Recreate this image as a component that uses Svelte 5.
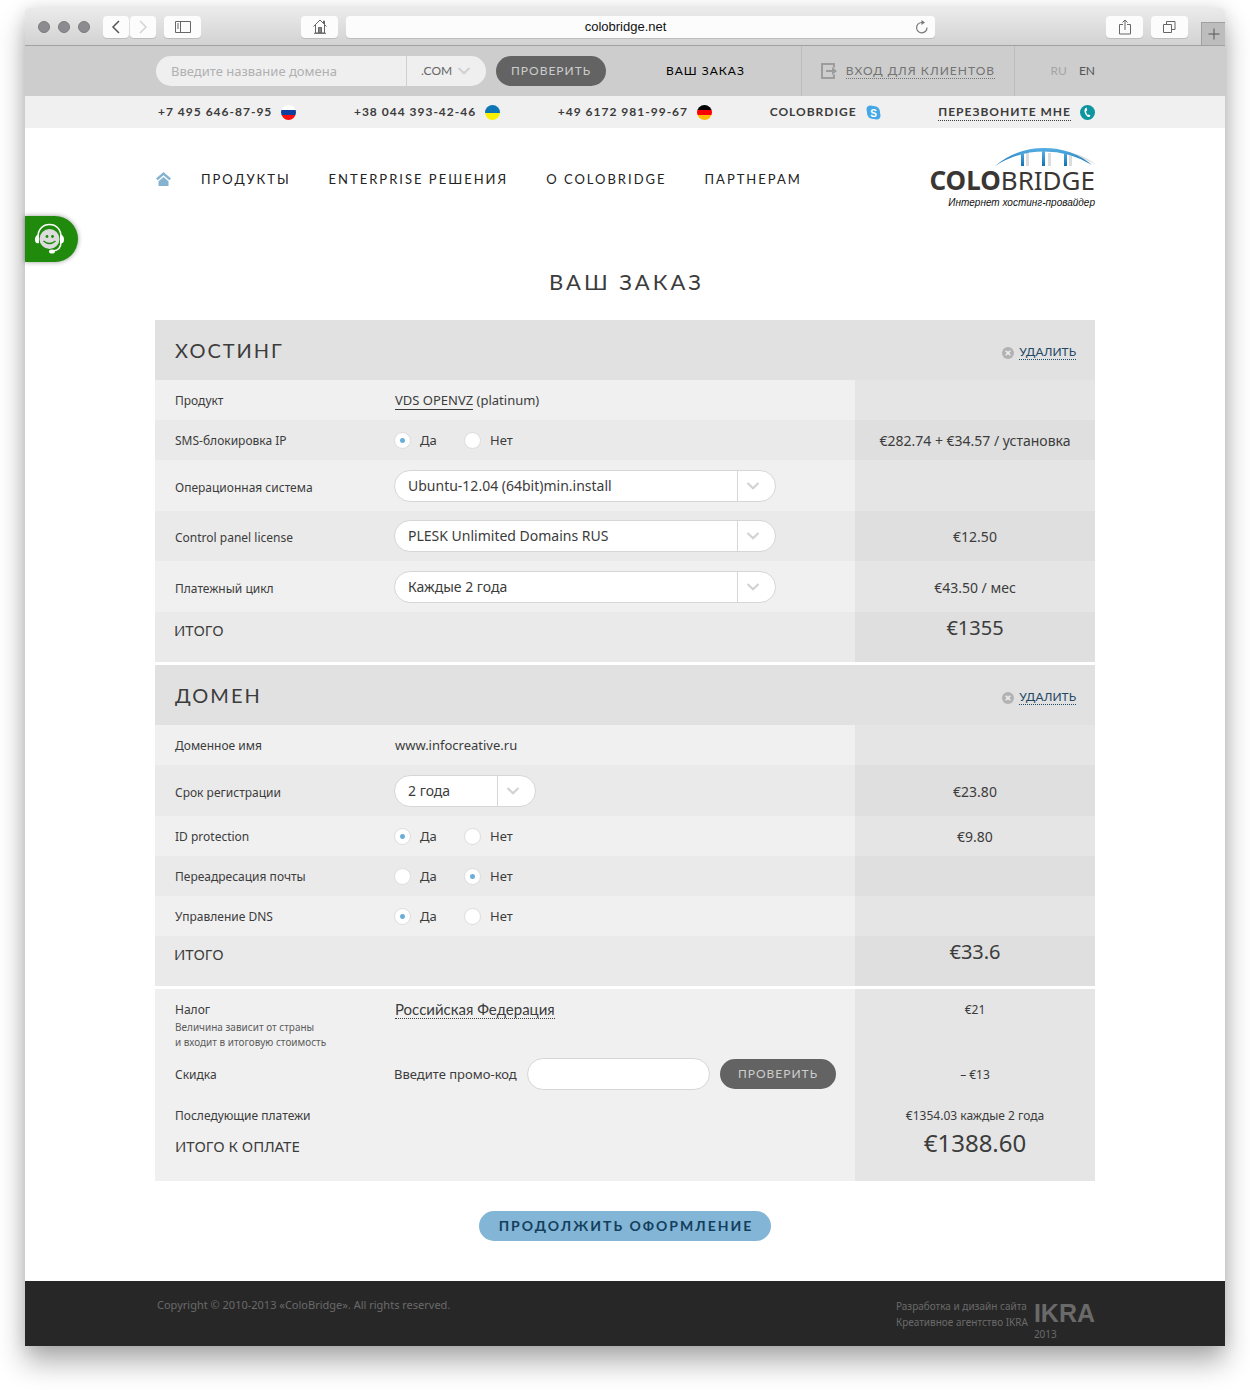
<script>
	let domain = $state("");
	let zone = $state(".COM");
	let promo = $state("");

	const yesNo = ["Да", "Нет"];

	const contacts = [
		{ text: "+7 495 646-87-95", icon: "ru" },
		{ text: "+38 044 393-42-46", icon: "ua" },
		{ text: "+49 6172 981-99-67", icon: "de" },
	];

	const menu = ["ПРОДУКТЫ", "ENTERPRISE РЕШЕНИЯ", "О COLOBRIDGE", "ПАРТНЕРАМ"];

	let sections = $state([
		{
			title: "ХОСТИНГ",
			total: "€1355",
			rows: [
				{ id: "product", label: "Продукт", type: "link", value: "VDS OPENVZ", note: "(platinum)" },
				{ id: "sms", label: "SMS-блокировка IP", type: "radio", value: "Да", price: "€282.74 + €34.57 / установка" },
				{ id: "os", label: "Операционная система", type: "select", value: "Ubuntu-12.04 (64bit)min.install", size: "tall" },
				{ id: "panel", label: "Control panel license", type: "select", value: "PLESK Unlimited Domains RUS", price: "€12.50", size: "mid" },
				{ id: "cycle", label: "Платежный цикл", type: "select", value: "Каждые 2 года", price: "€43.50 / мес", size: "tall" },
			],
		},
		{
			title: "ДОМЕН",
			total: "€33.6",
			rows: [
				{ id: "name", label: "Доменное имя", type: "text", value: "www.infocreative.ru" },
				{ id: "term", label: "Срок регистрации", type: "select", value: "2 года", price: "€23.80", size: "tall", short: true },
				{ id: "idp", label: "ID protection", type: "radio", value: "Да", price: "€9.80" },
				{ id: "mail", label: "Переадресация почты", type: "radio", value: "Нет" },
				{ id: "dns", label: "Управление DNS", type: "radio", value: "Да" },
			],
		},
	]);
</script>

{#snippet chevron()}
	<svg class="chevron" viewBox="0 0 14 8" width="14" height="8" aria-hidden="true">
		<path d="M1.5 1 7 6.2 12.5 1" fill="none" stroke="currentColor" stroke-width="2.2" />
	</svg>
{/snippet}

<div class="window">
	<div class="chrome">
		<div class="lights"><i></i><i></i><i></i></div>
		<div class="history">
			<button aria-label="Назад">
				<svg width="10" height="14" viewBox="0 0 10 14"><path d="M8 1 2 7l6 6" fill="none" stroke="#555" stroke-width="1.5" /></svg>
			</button>
			<button aria-label="Вперёд">
				<svg width="10" height="14" viewBox="0 0 10 14"><path d="m2 1 6 6-6 6" fill="none" stroke="#d4d4d4" stroke-width="1.5" /></svg>
			</button>
		</div>
		<button class="wide" aria-label="Боковая панель">
			<svg width="16" height="12" viewBox="0 0 16 12" fill="none" stroke="#666">
				<path d="M.5.5h15v11H.5zM5.5.5v11M2 3h2M2 5h2M2 7h2" />
			</svg>
		</button>
		<button class="wide home-btn" aria-label="Домой">
			<svg width="14" height="15" viewBox="0 0 14 15" fill="none" stroke="#666">
				<path d="M.5 7.5 7 1l6.5 6.5M2.5 6v8h9V6M1 14.3h12M10.5 4.5V2h1v3" />
				<path d="M5.5 13.5v-5h3v5z" fill="#888" />
			</svg>
		</button>
		<div class="address">
			<input aria-label="Адрес" value="colobridge.net" />
			<svg width="14" height="14" viewBox="0 0 14 14" aria-hidden="true">
				<path d="M12 7.5A5.2 5.2 0 1 1 7 2.5h1" fill="none" stroke="#777" stroke-width="1.2" />
				<path d="M6.5 0 10 2.5 6.5 5z" fill="#777" />
			</svg>
		</div>
		<button class="wide" aria-label="Поделиться">
			<svg width="12" height="16" viewBox="0 0 12 16" fill="none" stroke="#666">
				<path d="M4 5.5H.5V15h11V5.5H8M6 11V1M3.5 3.5 6 1l2.5 2.5" />
			</svg>
		</button>
		<button class="wide" aria-label="Вкладки">
			<svg width="13" height="12" viewBox="0 0 13 12" fill="none" stroke="#666">
				<path d="M.5 3.5h8v8h-8zM3.5 3V.5H12v8H9" />
			</svg>
		</button>
		<button class="new-tab" aria-label="Новая вкладка">
			<svg width="12" height="12" viewBox="0 0 12 12"><path d="M6 .5v11M.5 6h11" stroke="#555" /></svg>
		</button>
	</div>

	<div class="topbar">
		<div class="inner">
			<div class="search">
				<input aria-label="Название домена" placeholder="Введите название домена" bind:value={domain} />
				<div class="zone">
					<select aria-label="Зона" bind:value={zone}>
						<option>.COM</option>
						<option>.NET</option>
					</select>
					{@render chevron()}
				</div>
			</div>
			<button class="pill check">ПРОВЕРИТЬ</button>
			<a class="cart" href="#order">ВАШ ЗАКАЗ</a>
			<div class="login">
				<svg width="16" height="16" viewBox="0 0 16 16" aria-hidden="true">
					<path d="M13 4.5V1H1v14h12v-3.5" fill="none" stroke="#9c9c9c" stroke-width="2" />
					<path d="M5 7h6V4l5 4-5 4V9H5z" fill="#9c9c9c" />
				</svg>
				<a class="dotted" href="#login">ВХОД ДЛЯ КЛИЕНТОВ</a>
			</div>
			<div class="lang">
				<a href="#ru">RU</a>
				<a class="current" href="#en">EN</a>
			</div>
		</div>
	</div>

	<div class="contacts">
		<div class="inner">
			{#each contacts as c}
				<span class="contact">
					{c.text}
					<i class="flag {c.icon}"></i>
				</span>
			{/each}
			<span class="contact">
				COLOBRDIGE
				<svg width="15" height="15" viewBox="0 0 15 15" aria-hidden="true">
					<rect x="1" y="1" width="13" height="13" rx="6" fill="#45a8e6" />
					<circle cx="4.5" cy="4.5" r="4" fill="#45a8e6" />
					<circle cx="10.5" cy="10.5" r="4" fill="#45a8e6" />
					<text x="7.5" y="11.5" text-anchor="middle" class="skype-s">S</text>
				</svg>
			</span>
			<span class="contact">
				<a class="dotted" href="#callback">ПЕРЕЗВОНИТЕ МНЕ</a>
				<svg width="15" height="15" viewBox="0 0 15 15" aria-hidden="true">
					<circle cx="7.5" cy="7.5" r="7.5" fill="#0d95a0" />
					<path d="M6.6 2.6 5.2 3.2C3.6 5.6 4.8 9.8 8.2 12l1.7-.2.5-1.4-1.7-1-1 .6C6.6 8.8 6 7.5 6.1 6.1l1.2-.6z" fill="#fff" />
				</svg>
			</span>
		</div>
	</div>

	<header class="inner site-header">
		<nav>
			<a href="#home" aria-label="Главная">
				<svg width="15" height="14" viewBox="0 0 15 14" fill="#85b3cf">
					<path d="M7.5 0 0 6.5l1.7 1.7 5.8-5 5.8 5L15 6.5z" />
					<path d="M7.5 5 2.5 9.3V14h10V9.3z" />
				</svg>
			</a>
			{#each menu as item}
				<a href="#menu">{item}</a>
			{/each}
		</nav>
		<a class="logo" href="#home">
			<svg width="104" height="18" viewBox="0 0 104 18" aria-hidden="true">
				<defs>
					<linearGradient id="arc" x1="0" x2="0" y1="0" y2="1">
						<stop offset="0" stop-color="#58b0e4" />
						<stop offset="1" stop-color="#1371b3" />
					</linearGradient>
				</defs>
				<g fill="#dcdcdc">
					<path d="M32 5h3v13h-3zM54 5h3v13h-3zM75 5h3v13h-3z" />
					<path d="M60 1Q86 4 103 17Q84 7 60 3z" />
				</g>
				<g fill="url(#arc)">
					<path d="M1 18Q22 0 50 0T98 17Q76 3.5 50 3.5T1 18z" />
					<path d="M27 5h3v13h-3zM48 3h3v15h-3zM70 5h3v13h-3z" />
				</g>
			</svg>
			<span class="wordmark"><b>COLO</b>BRIDGE</span>
			<em>Интернет хостинг-провайдер</em>
		</a>
	</header>

	<button class="chat" aria-label="Онлайн-консультант">
		<svg width="32" height="32" viewBox="0 0 32 32">
			<path d="M4 14C4 6 9 1.5 15.5 1.5S27 6 27 14v5c0 5-3 8.5-8 9" fill="none" stroke="#fff" stroke-width="1.5" />
			<path d="M5 11v9C2 21 1 19 1 16.5S2 12 5 11zM26 11v9c3 1 4-1 4-3.5S29 12 26 11z" fill="#fff" />
			<circle cx="15.5" cy="16" r="10" fill="#dcdcdc" />
			<circle cx="13" cy="13.5" r="1.4" fill="#1f8a0c" />
			<circle cx="18.5" cy="13.5" r="1.4" fill="#1f8a0c" />
			<path d="M9.5 18q6 5 12 0" fill="none" stroke="#1f8a0c" stroke-width="1.4" />
			<ellipse cx="18" cy="28.5" rx="3" ry="2" fill="#fff" />
		</svg>
	</button>

	<main class="inner" id="order">
		<h1>ВАШ ЗАКАЗ</h1>

		{#each sections as section}
			<section>
				<div class="section-head">
					<h2>{section.title}</h2>
					<div class="remove">
						<svg width="12" height="12" viewBox="0 0 12 12" aria-hidden="true">
							<circle cx="6" cy="6" r="6" fill="#b2b2b2" />
							<path d="m3.7 3.7 4.6 4.6m0-4.6L3.7 8.3" stroke="#eee" stroke-width="1.6" />
						</svg>
						<a class="dotted" href="#remove">УДАЛИТЬ</a>
					</div>
				</div>
				<table class="striped">
					<tbody>
						{#each section.rows as row (row.id)}
							<tr class={row.size}>
								<th scope="row">
									{#if row.type === "select"}
										<label for={row.id}>{row.label}</label>
									{:else}
										<span id="{row.id}-label">{row.label}</span>
									{/if}
								</th>
								<td>
									{#if row.type === "link"}
										<a class="product" href="#product">{row.value}</a> {row.note}
									{:else if row.type === "radio"}
										<div class="radios" role="radiogroup" aria-labelledby="{row.id}-label">
											{#each yesNo as option}
												<label>
													<input type="radio" name={row.id} value={option} bind:group={row.value} />
													{option}
												</label>
											{/each}
										</div>
									{:else if row.type === "select"}
										<div class="select" class:short={row.short}>
											<select id={row.id}>
												<option>{row.value}</option>
											</select>
											{@render chevron()}
										</div>
									{:else}
										{row.value}
									{/if}
								</td>
								<td class="price">{row.price ?? ""}</td>
							</tr>
						{/each}
						<tr class="total">
							<th scope="row">ИТОГО</th>
							<td></td>
							<td class="price">{section.total}</td>
						</tr>
					</tbody>
				</table>
			</section>
		{/each}

		<table class="summary">
			<tbody>
				<tr class="tax">
					<th scope="row">
						Налог
						<small>Величина зависит от страны<br />и входит в итоговую стоимость</small>
					</th>
					<td><a class="dotted country" href="#country">Российская Федерация</a></td>
					<td class="price">€21</td>
				</tr>
				<tr class="discount">
					<th scope="row">Скидка</th>
					<td>
						<div class="promo">
							<label for="promo">Введите промо-код</label>
							<input id="promo" bind:value={promo} />
							<button class="pill">ПРОВЕРИТЬ</button>
						</div>
					</td>
					<td class="price">– €13</td>
				</tr>
				<tr class="next">
					<th scope="row">Последующие платежи</th>
					<td></td>
					<td class="price">€1354.03 каждые 2 года</td>
				</tr>
				<tr class="total grand">
					<th scope="row">ИТОГО К ОПЛАТЕ</th>
					<td></td>
					<td class="price">€1388.60</td>
				</tr>
			</tbody>
		</table>

		<button class="submit">ПРОДОЛЖИТЬ ОФОРМЛЕНИЕ</button>
	</main>

	<footer>
		<div class="inner">
			<p>Copyright © 2010-2013 «ColoBridge». All rights reserved.</p>
			<div class="agency">
				<p>Разработка и дизайн сайта<br />Креативное агентство IKRA</p>
				<div class="ikra"><strong>IKRA</strong><span>2013</span></div>
			</div>
		</div>
	</footer>
</div>

<style>
	:global(body) {
		background: #fff;
	}
	.window {
		--body: "Noto Sans", "Open Sans", sans-serif;
		--display: Lato, "Noto Sans", sans-serif;
		position: relative;
		margin: 8px 25px 45px;
		background: #fff;
		border-radius: 4px 4px 0 0;
		box-shadow: 0 16px 28px rgba(0, 0, 0, 0.32), 0 0 16px rgba(0, 0, 0, 0.1);
		font-family: var(--body);
		font-size: 13px;
		line-height: 20px;
		color: #3c3c3c;
	}
	* {
		box-sizing: border-box;
	}
	a {
		color: inherit;
		text-decoration: none;
	}
	svg {
		display: block;
		flex: none;
	}
	button,
	input,
	select {
		margin: 0;
		padding: 0;
		border: 0;
		font: inherit;
		color: inherit;
		outline: none;
	}
	select {
		appearance: none;
		background: none;
	}
	p {
		margin: 0;
	}
	.inner {
		max-width: 940px;
		margin: 0 auto;
	}
	.dotted {
		border-bottom: 1px dotted currentColor;
	}

	/* browser chrome */
	.chrome {
		display: flex;
		align-items: center;
		height: 38px;
		padding-left: 13px;
		background: linear-gradient(#ebebeb, #d2d2d2);
		border-bottom: 1px solid #a0a0a0;
		border-radius: 4px 4px 0 0;
	}
	.chrome button {
		display: grid;
		place-items: center;
		width: 26px;
		height: 22px;
		background: #fcfcfc;
		border-radius: 4px;
		box-shadow: 0 1px 0 #bdbdbd;
	}
	.chrome button.wide {
		width: 37px;
		margin-right: 8px;
	}
	.chrome button.home-btn {
		margin-left: 92px;
	}
	.chrome button.new-tab {
		align-self: flex-end;
		width: 24px;
		height: 23px;
		margin-left: 5px;
		background: #bdbdbd;
		border: solid #a0a0a0;
		border-width: 1px 0 0 1px;
		border-radius: 0;
		box-shadow: none;
	}
	.lights {
		display: flex;
		gap: 8px;
		margin-right: 13px;
	}
	.lights i {
		width: 12px;
		height: 12px;
		border-radius: 50%;
		background: #8b8b90;
		border: 1px solid #7c7c80;
	}
	.history {
		display: flex;
		gap: 1px;
		margin-right: 8px;
	}
	.address {
		display: flex;
		flex: 1;
		align-items: center;
		height: 22px;
		margin-right: 171px;
		padding-right: 6px;
		background: #fcfcfc;
		border-radius: 4px;
		box-shadow: 0 1px 0 #bdbdbd;
	}
	.address input {
		flex: 1;
		min-width: 0;
		padding-right: 10px;
		background: none;
		font-family: "Liberation Sans", Arial, sans-serif;
		text-align: center;
		color: #111;
	}

	.topbar {
		background: #cdcdcd;
	}
	.topbar .inner {
		display: flex;
		align-items: center;
		height: 50px;
		font-family: var(--display);
		font-size: 12px;
		padding-left: 1px;
	}
	.search {
		display: flex;
		flex: none;
		width: 330px;
		height: 30px;
		margin-right: 10px;
		border-radius: 15px;
		background: #efefef;
		overflow: hidden;
	}
	.search input {
		flex: 1;
		min-width: 0;
		padding-left: 15px;
		background: none;
		font-family: var(--body);
		font-size: 13px;
	}
	.search input::placeholder {
		color: #b0b0b0;
		opacity: 1;
	}
	.zone {
		position: relative;
		width: 80px;
		border-left: 1px solid #d0d0d0;
		color: #666;
	}
	.zone select {
		width: 100%;
		height: 100%;
		padding-left: 14px;
	}
	.chevron {
		position: absolute;
		top: 50%;
		right: 15px;
		margin-top: -4px;
		color: #d2d2d2;
		pointer-events: none;
	}
	.pill {
		height: 30px;
		padding: 0 18px;
		border-radius: 15px;
		background: #636363;
		color: #cdcdcd;
		font-family: var(--display);
		font-size: 12px;
		letter-spacing: 1px;
	}
	.pill.check {
		padding: 0 15px;
	}
	.cart {
		margin-left: 60px;
		color: #000;
		letter-spacing: 1px;
	}
	.login {
		display: flex;
		align-items: center;
		gap: 9px;
		height: 50px;
		margin-left: auto;
		padding: 0 19px;
		border: solid #bcbcbc;
		border-width: 0 1px;
		color: #747474;
		letter-spacing: 1px;
	}
	.login a {
		line-height: 14px;
	}
	.lang {
		display: flex;
		justify-content: flex-end;
		gap: 12px;
		width: 80px;
		color: #a5a5a5;
	}
	.lang .current {
		color: #555;
	}

	.contacts {
		background: #f0f0f0;
	}
	.contacts .inner {
		display: flex;
		justify-content: space-between;
		align-items: center;
		height: 32px;
		padding-left: 3px;
		font-family: var(--display);
		font-size: 12px;
		font-weight: 700;
		letter-spacing: 1px;
	}
	.contact {
		display: flex;
		align-items: center;
		gap: 9px;
	}
	.contact a {
		line-height: 16px;
	}
	.flag {
		width: 15px;
		height: 15px;
		border-radius: 50%;
	}
	.flag.ru {
		background: linear-gradient(#fff 33%, #0c3fa0 33% 66%, #fb0d0d 66%);
	}
	.flag.ua {
		background: linear-gradient(#0f76b5 50%, #fbf000 50%);
	}
	.flag.de {
		background: linear-gradient(#000 33%, #f00 33% 66%, #fb0 66%);
	}
	.skype-s {
		font: bold 10px "Liberation Sans", sans-serif;
		letter-spacing: 0;
		fill: #fff;
	}

	.site-header {
		display: flex;
		justify-content: space-between;
		align-items: flex-start;
		padding-top: 20px;
	}
	nav {
		display: flex;
		align-items: center;
		gap: 38px;
		padding: 21px 0 0 1px;
		font-family: var(--display);
		color: #222;
		letter-spacing: 2px;
	}
	nav a:first-child {
		margin-right: -8px;
	}
	.logo {
		display: flex;
		flex-direction: column;
		align-items: flex-end;
	}
	.logo svg {
		margin-right: -3px;
	}
	.wordmark {
		font-size: 26px;
		line-height: 28px;
		color: #3a3634;
	}
	.logo em {
		font-family: "Liberation Sans", Arial, sans-serif;
		font-size: 10px;
		line-height: 18px;
		color: #111;
	}

	/* sticks to the left edge over the page */
	.chat {
		position: absolute;
		top: 208px;
		left: 0;
		width: 53px;
		height: 46px;
		padding-left: 9px;
		border-radius: 0 23px 23px 0;
		background: #1f8a0c;
		box-shadow: 0 0 5px rgba(0, 0, 0, 0.4);
	}

	main {
		display: flex;
		flex-direction: column;
		padding: 54px 0 40px;
	}
	h1,
	h2 {
		margin: 0;
		font-family: var(--display);
		font-weight: 400;
	}
	h1 {
		margin-bottom: 22px;
		padding-left: 3px;
		font-size: 22px;
		line-height: 32px;
		letter-spacing: 3px;
		text-align: center;
	}
	section {
		margin-bottom: 3px;
	}
	.section-head {
		display: flex;
		justify-content: space-between;
		align-items: center;
		height: 60px;
		padding: 0 19px 0 20px;
		background: #e1e1e1;
	}
	h2 {
		font-size: 20px;
		letter-spacing: 2px;
	}
	.remove {
		display: flex;
		align-items: center;
		gap: 5px;
		padding-top: 5px;
		color: #1f4a66;
		font-family: var(--display);
		font-size: 12px;
		line-height: 14px;
	}

	table {
		width: 100%;
		table-layout: fixed;
		border-collapse: collapse;
	}
	tr {
		height: 40px;
		background: #f0f0f0;
	}
	tr.tall {
		height: 51px;
	}
	tr.mid {
		height: 50px;
	}
	th,
	td {
		padding: 0;
		text-align: left;
	}
	th {
		width: 240px;
		padding: 2px 0 0 20px;
		font-size: 12px;
		font-weight: 400;
	}
	.tall th,
	.mid th {
		padding-top: 4px;
	}
	.price {
		width: 240px;
		padding-top: 2px;
		background: #e5e5e5;
		font-size: 14px;
		text-align: center;
	}
	.striped tr:nth-child(even) {
		background: #eaeaea;
	}
	.striped tr:nth-child(even) .price {
		background: #dfdfdf;
	}
	.total th,
	.total td {
		padding-top: 8px;
		vertical-align: top;
	}
	.total th {
		padding-left: 19px;
		font-size: 15px;
	}
	tr.total {
		height: 50px;
	}
	.total .price {
		padding-top: 6px;
		font-size: 20px;
	}
	.product {
		border-bottom: 1px solid currentColor;
	}

	.select {
		position: relative;
		width: 382px;
		height: 32px;
		margin-left: -1px;
		border: 1px solid #d6d6d6;
		border-radius: 16px;
		background: #fff;
	}
	.select.short {
		width: 142px;
	}
	/* separator before the arrow */
	.select::after {
		content: "";
		position: absolute;
		top: 0;
		right: 37px;
		height: 100%;
		border-left: 1px solid #d6d6d6;
	}
	.select select {
		width: 100%;
		height: 100%;
		padding-left: 13px;
		font-size: 14px;
	}
	.radios {
		display: flex;
		margin-left: -1px;
	}
	.radios label {
		display: flex;
		align-items: center;
		gap: 9px;
		width: 70px;
	}
	.radios input {
		appearance: none;
		width: 17px;
		height: 17px;
		border: 1px solid #dcdcdc;
		border-radius: 50%;
		background: #fff;
	}
	.radios input:checked {
		background: radial-gradient(circle, #6baed8 2px, #fff 3px);
	}

	.summary .price {
		font-size: 12px;
	}
	.summary .tax {
		height: 60px;
	}
	.tax th,
	.tax td {
		padding-top: 11px;
		vertical-align: top;
	}
	small {
		display: block;
		font-size: 10px;
		line-height: 15px;
		color: #5c5c5c;
	}
	.country {
		display: inline-block;
		font-size: 15px;
		line-height: 18px;
		font-family: var(--display);
	}
	.summary .discount {
		height: 48px;
	}
	.summary .next {
		height: 34px;
	}
	.promo {
		display: flex;
		align-items: center;
		gap: 10px;
		margin: 0 19px 0 -1px;
	}
	.promo input {
		flex: 1;
		min-width: 0;
		height: 32px;
		padding: 0 15px;
		border: 1px solid #d6d6d6;
		border-radius: 16px;
		background: #fff;
	}
	.summary .grand {
		height: 49px;
	}
	.summary .grand th {
		padding: 4px 0 0 20px;
	}
	.summary .grand .price {
		padding-top: 1px;
		font-size: 24px;
	}
	.submit {
		align-self: center;
		height: 30px;
		margin-top: 30px;
		padding: 0 18px 0 20px;
		border-radius: 15px;
		background: #82b5d6;
		color: #143f5e;
		font-family: var(--display);
		font-size: 14px;
		font-weight: 700;
		letter-spacing: 2px;
	}

	footer {
		background: #272727;
		color: #6a6a6a;
		font-size: 11px;
	}
	footer .inner {
		display: flex;
		justify-content: space-between;
		height: 65px;
		padding: 14px 0 0 2px;
	}
	.agency {
		display: flex;
		gap: 6px;
		font-size: 10px;
		line-height: 16px;
	}
	.agency p {
		padding-top: 3px;
	}
	.ikra {
		display: flex;
		flex-direction: column;
		padding-top: 3px;
		line-height: 12px;
	}
	.ikra strong {
		font-family: "Liberation Sans", Arial, sans-serif;
		font-size: 25px;
		line-height: 30px;
	}
</style>
